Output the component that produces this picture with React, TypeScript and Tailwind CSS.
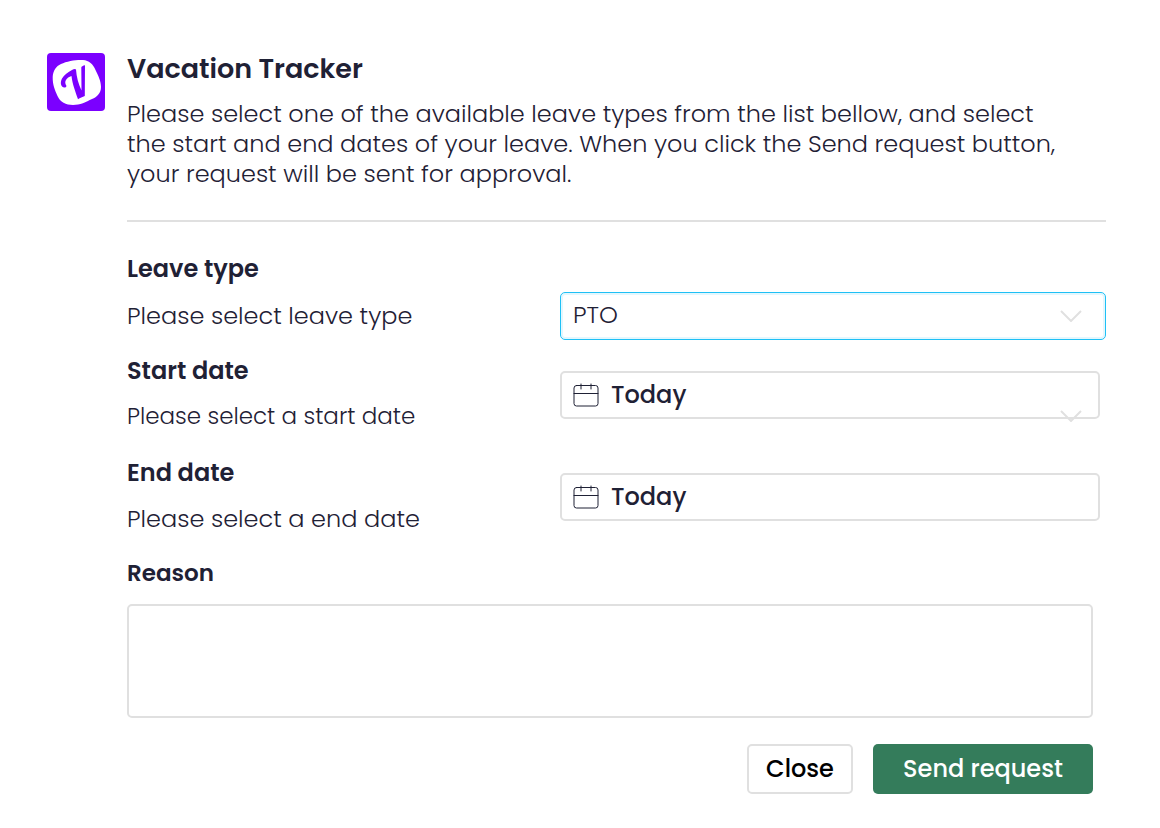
import { useState } from "react";

function Logo() {
  return (
    <svg viewBox="0 0 58 58" className="size-[58px] shrink-0" aria-hidden="true">
      <rect width="58" height="58" rx="4" fill="#7b00ff" />
      <path
        d="M14 11 C20 8 30 6.5 36 7 C42 7.5 46 11 48.500 17 C51 22 54 28 54 34 C54 40 50 44 45 46 C39 49 33 52 26 52 C19 52 13 49 10.500 43 C8 37 5.500 32 5.700 24 C6 18 9 13 14 11 Z"
        fill="#fff"
      />
      <path
        d="M17.500 34.500 C13.500 34.500 13 29 15 25.500 C17 22 21 19 25 17 C26.500 16 28.500 15.500 29 16.500 C29.500 24 31.500 31 34.500 37.500 L34.300 14.500 C34.300 13.500 36 12.700 38 12.300 L37.800 43 C35.500 43.700 33 45 31 46.300 C28.500 38.500 25.500 32 24.500 23 C19.500 24.500 16.500 28.500 19.500 33 C19 34 18.500 34.500 17.500 34.500 Z"
        fill="#7b00ff"
      />
    </svg>
  );
}

function CalendarIcon() {
  return (
    <svg
      viewBox="0 0 26 26"
      className="size-[26px] shrink-0"
      fill="none"
      stroke="#1f2135"
      strokeWidth="1"
      strokeLinecap="round"
      aria-hidden="true"
    >
      <rect x="1" y="3.500" width="24" height="20.500" rx="2.500" />
      <path d="M1 11.500H25M8 2V7M18 2V7" />
    </svg>
  );
}

function Chevron({ className }: { className: string }) {
  return (
    <svg
      viewBox="0 0 22 12"
      className={className}
      fill="none"
      stroke="#e0e0e0"
      strokeWidth="2"
      aria-hidden="true"
    >
      <path d="M1 1L11 11L21 1" />
    </svg>
  );
}

function DateInput({ id, value, onChange }: { id: string; value: string; onChange: (value: string) => void }) {
  return (
    <div className="flex h-12 items-center gap-3 rounded-[5px] border-2 border-[#e0e0e0] px-[11px]">
      <CalendarIcon />
      <input
        id={id}
        type="text"
        value={value}
        onChange={(e) => onChange(e.target.value)}
        className="min-w-0 flex-1 bg-transparent text-2xl font-medium outline-none"
      />
    </div>
  );
}

export default function App() {
  const [leaveType, setLeaveType] = useState("PTO");
  const [startDate, setStartDate] = useState("Today");
  const [endDate, setEndDate] = useState("Today");
  const [reason, setReason] = useState("");

  return (
    <main className="flex min-h-screen gap-[22px] bg-white pt-[53px] pr-[54px] pb-8 pl-[47px] font-['Poppins','Inter',sans-serif] text-[#1f2135]">
      <Logo />

      <form className="min-w-0 flex-1" onSubmit={(e) => e.preventDefault()}>
        <h1 className="text-[27px] leading-8 font-semibold">Vacation Tracker</h1>
        <p className="mt-3.5 pr-8 text-2xl leading-[30px] font-light">
          Please select one of the available leave types from the list bellow, and select
          the start and end dates of your leave. When you click the Send request button,
          your request will be sent for approval.
        </p>

        <hr className="mt-[31px] border-t-2 border-[#e0e0e0]" />

        {/* Leave type */}
        <label htmlFor="leave-type" className="mt-8 block text-2xl leading-[30px] font-semibold">
          Leave type
        </label>
        <div className="mt-2 grid grid-cols-[433px_1fr] items-center">
          <p className="text-2xl leading-[30px] font-light">Please select leave type</p>
          <div className="relative">
            <select
              id="leave-type"
              value={leaveType}
              onChange={(e) => setLeaveType(e.target.value)}
              className="h-12 w-full appearance-none rounded-[5px] border border-[#1fc0f5] bg-white px-3 pb-0.5 text-2xl font-light shadow-[inset_0_0_0_2px_#e3f7fe] outline-none"
            >
              <option>PTO</option>
            </select>
            <Chevron className="pointer-events-none absolute top-[18px] right-6 h-3 w-[22px]" />
          </div>
        </div>

        {/* Start date */}
        <div className="mt-4 grid grid-cols-[433px_1fr] items-start">
          <div>
            <label htmlFor="start-date" className="block text-2xl leading-[30px] font-semibold">
              Start date
            </label>
            <p className="mt-[15px] text-[23px] leading-[30px] font-light">Please select a start date</p>
          </div>
          <div className="relative pt-[15px] pr-1.5">
            <DateInput id="start-date" value={startDate} onChange={setStartDate} />
            <Chevron className="pointer-events-none absolute right-6 -bottom-[3px] h-3 w-[22px]" />
          </div>
        </div>

        {/* End date */}
        <div className="mt-[27px] grid grid-cols-[433px_1fr] items-start">
          <div>
            <label htmlFor="end-date" className="block text-2xl leading-[30px] font-semibold">
              End date
            </label>
            <p className="mt-4 text-2xl leading-[30px] font-light">Please select a end date</p>
          </div>
          <div className="pt-[15px] pr-1.5">
            <DateInput id="end-date" value={endDate} onChange={setEndDate} />
          </div>
        </div>

        {/* Reason */}
        <div className="mt-6 pr-[13px]">
          <label htmlFor="reason" className="block text-[23px] leading-[30px] font-semibold">
            Reason
          </label>
          <textarea
            id="reason"
            value={reason}
            onChange={(e) => setReason(e.target.value)}
            className="mt-4 block h-[114px] w-full resize-none rounded-[5px] border-2 border-[#e0e0e0] px-3 py-2 text-2xl font-light outline-none"
          />
          <div className="mt-[26px] flex justify-end gap-5">
            <button
              type="button"
              className="h-[50px] w-[106px] rounded-[5px] border-2 border-[#e0e0e0] text-2xl font-medium text-black"
            >
              Close
            </button>
            <button
              type="submit"
              className="h-[50px] w-[220px] rounded-[5px] bg-[#347c5b] text-2xl font-medium text-white"
            >
              Send request
            </button>
          </div>
        </div>
      </form>
    </main>
  );
}
